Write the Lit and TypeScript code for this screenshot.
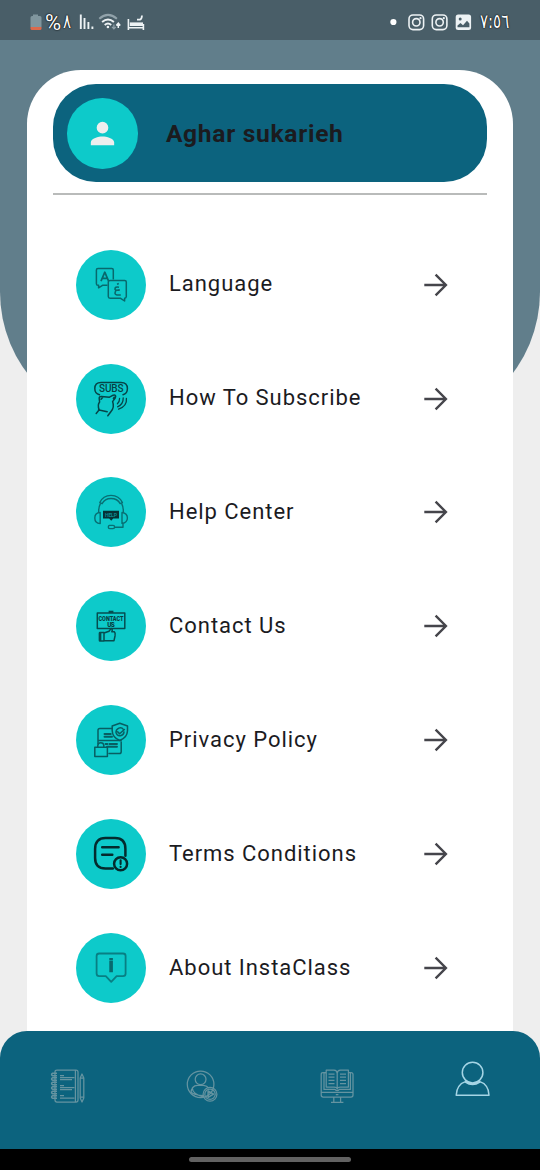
import { LitElement, html, css, svg } from "lit";
import { customElement, property } from "lit/decorators.js";

const menuIcons: Record<string, unknown> = {
  language: svg`
    <g fill="none" stroke="#08696d" stroke-width="1.5" stroke-linejoin="round">
      <path d="M31.5 35.3H26.5L22.6 37.8V35.3H22q-1.6 0-1.6-1.6V20.1q0-1.6 1.6-1.6H35.7q1.6 0 1.6 1.6V29.6"/>
      <path d="M34 30.4H48.6q1.7 0 1.7 1.7V46.6q0 1.7-1.7 1.7V51L44.6 48.3H34q-1.7 0-1.7-1.7V32.1q0-1.7 1.7-1.7Z"/>
      <path d="M25 31.2L28.8 22.2L32.6 31.2M26.3 28.4H31.3" stroke-width="1.7"/>
      <path d="M43 37.2Q38.8 36.4 39 39.3Q39.4 40.8 43.8 39.9M40 40.4Q37.6 44.5 41 45H44.8M41 34.2L42.8 33.6" stroke-width="1.6"/>
    </g>`,
  subscribe: svg`
    <g fill="none" stroke="#064548" stroke-width="1.5" stroke-linejoin="round" stroke-linecap="round">
      <path d="M23.5 30.8Q18.8 29.8 18.8 24.6Q18.8 18.5 25 18.5H45Q51.4 18.5 51.4 24.6Q51.4 29.8 47 30.7"/>
      <path d="M20.2 49.5L23.2 45.8Q21.2 41 23.6 38L23.2 34.5Q23 32.3 25.5 32.4L33.5 33.2L37.2 31.2Q40.8 30.6 39.2 34L36.6 37.6Q38.7 43.4 35 47.5L31.8 51.8M22.6 45.4L24.3 46.2L31.2 47.7M25 35.3L26.6 33.4M37.4 34.6L38.2 33.2"/>
      <path d="M41.4 39.8Q43.6 38 43.6 34.3M41.6 42.8Q47.4 40 47.2 33.9M42.6 45.2Q51.3 42 50.4 34.4" stroke-width="1.3"/>
    </g>
    <text x="35.3" y="28.2" text-anchor="middle" font-size="10" font-weight="500" textLength="24.5" fill="#063f42">SUBS</text>`,
  help: svg`
    <g fill="none" stroke="#086f73" stroke-width="1.4" stroke-linejoin="round" stroke-linecap="round">
      <path d="M23.8 25.6Q27 18.4 35 18.4T46.4 25.6L44.2 26.6Q41.4 21.5 35 21.5T26.1 26.7Z"/>
      <path d="M24.3 26.8Q22.5 30 22.7 35.2M45.8 26.8Q47.5 30 47.3 35.2"/>
      <path d="M24.2 35.5V46.6Q18.8 46.3 18.8 41T24.2 35.5ZM46 35.5V46.4Q51.4 45.6 51.4 41T46 35.5Z"/>
      <path d="M47 46.4V50.3H38.7M33.3 48.4H37Q38.6 48.4 38.6 50T37 51.6H33.8Q32.3 51.6 32.3 50T33.8 48.4"/>
    </g>
    <path d="M27 33.7H43V41.5H37.2L35.2 43.8L33.2 41.5H27Z" fill="#063235"/>
    <text x="35" y="40.1" text-anchor="middle" font-size="5.2" font-weight="700" textLength="12" fill="#0a8b8e">HELP</text>`,
  contact: svg`
    <g fill="none" stroke="#064d50" stroke-width="1.5" stroke-linejoin="round">
      <path d="M21.3 22H48.8V37.4H21.3Z"/>
      <path d="M24.6 41.2V50M24 41.6H28V50H24Q23.4 50 23.4 49.4V42.2Q23.4 41.6 24 41.6ZM28 42L33 40.2L35.2 37.4Q37 38.2 35.8 40.8H38.4Q39.6 41.8 39 45L38 49.7H28"/>
    </g>
    <path d="M32.6 19.7H37.4V22H32.6Z" fill="#064d50"/>
    <g font-weight="900" fill="#063f42" text-anchor="middle">
      <text x="35" y="30" font-size="6.4" textLength="25" lengthAdjust="spacingAndGlyphs">CONTACT</text>
      <text x="35" y="36.2" font-size="6.4" textLength="7.5">US</text>
    </g>`,
  privacy: svg`
    <g fill="none" stroke="#085e62" stroke-width="1.5" stroke-linejoin="round" stroke-linecap="round">
      <path d="M36 23.5H23.8Q22 23.5 22 25.3V38.8M45.2 37V46.8Q45.2 48.6 43.4 48.6H33M22.4 35.5H45"/>
      <path d="M43.8 18.2L51.5 21V25.8Q51.2 32.6 43.8 35.5Q36.4 32.6 36.2 25.8V21Z"/>
      <path d="M47.6 24.6Q45.8 22.2 42.8 23.1Q39.8 24.4 40 27.6Q41 31 44.2 30.7Q47.8 30 48 26.9M41.7 26.9L43.6 28.8L48.4 24.5"/>
      <path d="M18.8 42.3H31.4V51.5H18.8ZM21.8 42V40.5Q22 37.7 24.8 37.7T27.8 40.5V42"/>
      <path d="M28.5 29H34.8M28.5 31.8H36M29.5 39H31.4M33.5 39H41M31 41.8H41" stroke-width="1.9"/>
    </g>`,
  terms: svg`
    <g fill="none" stroke="#042b2e" stroke-width="2.5" stroke-linecap="round">
      <path d="M36.8 49.4H29.5Q19.1 49.4 19.1 39V30Q19.1 19.1 29.5 19.1H39Q49.4 19.1 49.4 30V36.8"/>
      <path d="M26.2 28.2H42.6M26.2 35.8H36.3"/>
      <circle cx="44.6" cy="44.8" r="6.5"/>
      <path d="M44.6 41.3V45.1M44.6 47.8V48" stroke-width="2.1"/>
    </g>`,
  about: svg`
    <g fill="none" stroke="#087f83" stroke-width="1.8" stroke-linejoin="round">
      <path d="M23.2 20.5H47Q49.6 20.5 49.6 23V40.6Q49.6 43.2 47 43.2H40.6L35.2 48.8L29.8 43.2H23.2Q20.6 43.2 20.6 40.6V23Q20.6 20.5 23.2 20.5Z"/>
      <path d="M35.1 25V27.4M35.1 28V39.3" stroke="#076a6e" stroke-width="3.6"/>
    </g>`,
};

const navIcons: Record<string, unknown> = {
  notebook: svg`
    <path d="M5 3.8Q5 2 7 2H26Q28 2 28 4V32Q28 34 26 34H7Q5 34 5 32Z"/>
    <path d="M25.4 2V34"/>
    ${[6.5, 11, 15.5, 20, 24.5, 29].map((y) => svg`<path d=${`M7 ${y - 1.2}H2.4Q.8 ${y} 2.4 ${y + 1.2}H7`} stroke-width="1.5"/>`)}
    <path d="M10 7.5H14M10 9.5H24.5M10 11.5H22M10 17.5H14M10 19.5H24.5M10 21.5H22M10 27.5H14M10 30H24.5"/>
    <path d="M30.2 10L32 6L33.8 10V30L32 34L30.2 30ZM30.2 10H33.8M30.2 29H33.8"/>`,
  tutor: svg`
    <circle cx="15.6" cy="16.3" r="13.3"/><circle cx="15.6" cy="11.3" r="5.4"/>
    <path d="M5.9 25.3Q6.3 17.5 12.6 17.3H18.6Q22 17.7 23.8 20.1M5.4 23.7Q8.9 27.6 18.6 27.6M7.2 19.8Q7.6 26.3 18.2 28.8"/>
    <circle cx="25" cy="26.2" r="6.9"/><circle cx="25" cy="26.2" r="5.2"/>
    <path d="M23.1 23L28.5 26.2L23.1 29.4Z" stroke-width="1.5"/>`,
  book: svg`
    <path d="M6 4.5H3Q1.2 4.5 1.2 6.5V27Q1.2 29 3.2 29H31Q33 29 33 27V6.5Q33 4.5 31 4.5H28.6M1.2 24.3H33"/>
    <path d="M6.2 2.2H14Q17.2 2.5 17.2 5.4Q17.2 2.5 20.4 2.2H28.4V19H20.4Q17.5 19 17.2 21Q17 19 14 19H6.2ZM17.2 5V21M6 4.5H4V21.4H15Q17.2 24 19.4 21.4H30.4V4.5"/>
    <path d="M8.5 6H14.5M8.5 9.2H14.5M8.5 12.4H14.5M8.5 15.6H14.5M20 6H26M20 9.2H26M20 12.4H26M20 15.6H26M13.8 29V34M20.6 29V34M11 34.3H23.4M15.8 26.7H18.4"/>`,
  profile: svg`
    <circle cx="17.6" cy="11.6" r="10.3"/>
    <path d="M12 19.9Q1.6 23.3 1.2 34.2H34Q33.8 23.3 23.2 19.9M11.4 20.3Q17.6 24.8 23.8 20.3M10.4 21.2Q17.6 26 24.8 21.2"/>`,
};

@customElement("status-bar")
class StatusBar extends LitElement {
  static styles = css`
    :host { display: flex; justify-content: space-between; align-items: center; height: 40px; padding: 0 32px 0 29px; box-sizing: border-box; background: #495e68; }
    .group { display: flex; align-items: center; height: 40px; }
    .battery { width: 13px; margin-right: 3px; }
    .percent { font: 22px/40px Roboto, sans-serif; width: 18px; padding-top: 5px; }
    .digits { font: 20px/40px "DejaVu Sans", sans-serif; padding-top: 2px; transform: scaleX(0.75); transform-origin: left center; }
    .percent, .digits { color: #fff; text-shadow: 0 0 2px #000, 0 0 1px #000; white-space: nowrap; }
    .eight { width: 10px; margin-right: 6px; padding-left: 0; box-sizing: border-box; }
    .time { letter-spacing: -1.1px; width: 28px; margin-left: 9px; }
    svg { display: block; overflow: visible; }
  `;
  render() {
    const camera = svg`<g fill="none" stroke="#edf2f4" stroke-width="1.6"><rect x="1" y="1" width="14.6" height="14.6" rx="4"/><circle cx="8.3" cy="8.3" r="3.7"/></g><circle cx="12.5" cy="4.2" r="1.1" fill="#edf2f4"/>`;
    return html`
      <div class="group">
        <svg class="battery" width="13" height="40" viewBox="29 0 13 40"><path d="M33 14.5h5v1.5h2q1.5 0 1.5 1.5V27h-11v-9.5q0-1.5 1.5-1.5h1Z" fill="#80969e"/><path d="M30.5 27h11v1.5q0 1.5-1.5 1.5h-8q-1.5 0-1.5-1.5Z" fill="#dc6a4c"/></svg>
        <span class="percent">%</span><span class="digits eight">٨</span>
        <svg width="68" height="40" viewBox="78 0 68 40" fill="none" stroke="#edf2f4">
          <path d="M79.8 14.5V29M83.5 18V29M87.4 22V29M91.4 26.5V29" stroke-width="1.9"/>
          <path d="M98.3 18.7Q107 11 115.9 18.7" stroke="#91a2aa" stroke-width="2"/>
          <path d="M101.1 22Q107 16.8 112.9 22M103.7 25Q107 22 110.2 25" stroke-width="1.9"/>
          <circle cx="106.9" cy="27" r="1.3" fill="#edf2f4" stroke="none"/>
          <path d="M117.3 28V23.6M115.3 25.4L117.3 23.2L119.3 25.4" stroke-width="1.5"/>
          <path d="M112.9 24.5V28.5M111 26.8L112.9 28.8L114.8 26.8" stroke="#91a2aa" stroke-width="1.2"/>
          <path d="M127.4 19V30M127.4 27.8H143M142.4 24V30" stroke-width="1.6"/>
          <path d="M128.8 22.4H142V26H128.8Z" fill="#edf2f4" stroke="none"/>
          <path d="M136 19.7H138.9Q140.7 19.2 141 15.5" stroke-width="1.8"/>
        </svg>
      </div>
      <div class="group">
        <svg width="81" height="40" viewBox="390 0 81 40">
          <circle cx="393.4" cy="22" r="3.1" fill="#fff"/>
          <g transform="translate(408 14)">${camera}</g>
          <g transform="translate(431.3 14)">${camera}</g>
          <rect x="455.7" y="14.4" width="15.4" height="15.6" rx="2.5" fill="#edf2f4"/>
          <circle cx="460.2" cy="19" r="1.5" fill="#495e68"/>
          <path d="M457.5 27.3V25.6L460.5 23L463 25.3L467 20.8L469.4 23.4V27.3Z" fill="#495e68"/>
        </svg>
        <span class="digits time">٧:٥٦</span>
      </div>`;
  }
}

@customElement("menu-row")
class MenuRow extends LitElement {
  @property() icon = "";
  @property() label = "";
  static styles = css`
    :host { display: flex; align-items: center; height: 70px; padding: 0 38.5px 0 23px; font-family: Roboto, sans-serif; }
    .badge { width: 70px; height: 70px; border-radius: 50%; background: #0dcaca; flex: none; }
    .badge svg { display: block; font-family: Roboto, sans-serif; }
    .label { flex: 1; margin-left: 23px; padding-bottom: 1px; font-size: 22px; line-height: 30px; letter-spacing: 0.96px; color: #1b1b1f; white-space: nowrap; }
    .arrow { display: block; }
  `;
  render() {
    return html`
      <div class="badge"><svg width="70" height="70" viewBox="0 0 70 70">${menuIcons[this.icon]}</svg></div>
      <span class="label">${this.label}</span>
      <svg class="arrow" width="26" height="26" viewBox="0 0 26 26" fill="none" stroke="#45454b" stroke-width="2.4"><path d="M2.3 13H23.3M13.6 2.7L23.9 13L13.6 23.3"/></svg>`;
  }
}

@customElement("bottom-nav")
class BottomNav extends LitElement {
  static styles = css`
    :host { display: block; background: #000; }
    .bar { display: grid; grid-template-columns: repeat(4, 1fr); justify-items: center; height: 118px; padding-top: 37px; box-sizing: border-box; background: #0c637e; border-radius: 27px 27px 0 0; }
    .item { fill: none; stroke: #6594a1; stroke-width: 1.25; stroke-linejoin: round; overflow: visible; }
    .active { stroke: #a5d5e5; stroke-width: 1.5; margin-top: -7px; }
    .system { display: flex; justify-content: center; height: 21px; padding-top: 8px; box-sizing: border-box; background: #000; }
    .handle { width: 162px; height: 5px; border-radius: 3px; background: #626262; }
    .wrap { background: linear-gradient(90deg, #eee 27px, #fff 27px 513px, #eee 513px); }
  `;
  render() {
    return html`
      <div class="wrap"><div class="bar">
        ${["notebook", "tutor", "book", "profile"].map((name) => html`
          <svg class="item ${name === "profile" ? "active" : ""}" width="35" height="36" viewBox="0 0 35 36">${navIcons[name]}</svg>`)}
      </div></div>
      <div class="system"><div class="handle"></div></div>`;
  }
}

@customElement("app-root")
class AppRoot extends LitElement {
  static styles = css`
    :host { display: grid; grid-template: 40px 991px 139px / 540px; width: 540px; height: 1170px; overflow: hidden; background: #eee; font-family: Roboto, sans-serif; }
    .backdrop { grid-area: 1 / 1 / 3 / 2; height: 427px; background: #617e8b; border-radius: 0 0 135px 135px; }
    status-bar { grid-area: 1 / 1; }
    .card { grid-area: 2 / 1; margin: 30px 27px 0; padding: 14.4px 26.5px 0 26px; background: #fff; border-radius: 54px 54px 0 0; }
    .profile { display: flex; align-items: center; height: 98px; padding-left: 14.4px; box-sizing: border-box; border-radius: 43px; background: #0c637e; }
    .avatar { width: 70.5px; height: 70.5px; border-radius: 50%; background: #0dcaca; display: grid; place-items: center; }
    .name { margin-left: 28px; padding-top: 1px; font-size: 24.6px; font-weight: 700; letter-spacing: 0.7px; color: #1b1b1f; line-height: 32px; }
    .rule { height: 2px; margin-top: 10.6px; background: #b9bbba; }
    .menu { display: grid; row-gap: 43.9px; margin-top: 54.7px; }
    bottom-nav { grid-area: 3 / 1; }
  `;
  render() {
    const rows = [
      ["language", "Language"],
      ["subscribe", "How To Subscribe"],
      ["help", "Help Center"],
      ["contact", "Contact Us"],
      ["privacy", "Privacy Policy"],
      ["terms", "Terms Conditions"],
      ["about", "About InstaClass"],
    ];
    return html`
      <div class="backdrop"></div>
      <status-bar></status-bar>
      <main class="card">
        <div class="profile">
          <div class="avatar"><svg width="35" height="35" viewBox="0 0 24 24" fill="#eee"><path d="M12 12a4 4 0 1 0 0-8 4 4 0 0 0 0 8Zm0 2c-2.67 0-8 1.34-8 4v2h16v-2c0-2.66-5.33-4-8-4Z"/></svg></div>
          <span class="name">Aghar sukarieh</span>
        </div>
        <div class="rule"></div>
        <div class="menu">${rows.map(([icon, label]) => html`<menu-row icon=${icon} label=${label}></menu-row>`)}</div>
      </main>
      <bottom-nav></bottom-nav>`;
  }
}
